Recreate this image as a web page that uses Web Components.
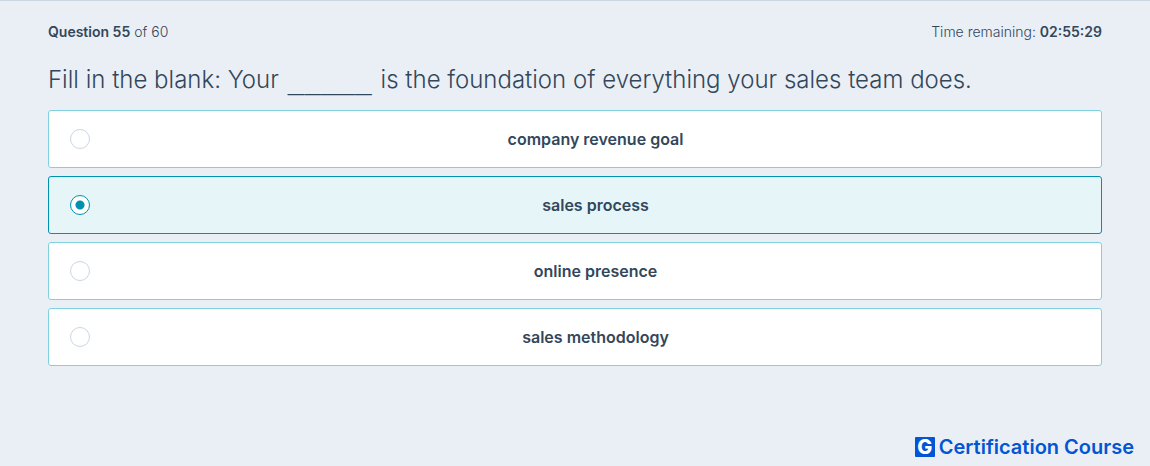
<!DOCTYPE html>
<html lang="en">
<head>
<meta charset="utf-8">
<meta name="viewport" content="width=device-width, initial-scale=1">
<title>Exam question</title>
<style>
  html { height: 100%; }
  body { margin: 0; min-height: 100%; display: grid; background: #eaeff6; color: #33475b; font-family: Inter, "Open Sans", sans-serif; }
  b { font-weight: 600; }
  .blank { margin: 0 2px; font-family: "DejaVu Sans Mono", monospace; font-size: 28px; line-height: 24px; }
</style>
</head>
<body>
<exam-page>
  <exam-status slot="status">
    <span slot="progress"><b>Question 55</b> of 60</span>
    <span slot="time">Time remaining: <b>02:55:29</b></span>
  </exam-status>
  <exam-question>
    <span slot="prompt">Fill in the blank: Your <span class="blank">_____</span> is the foundation of everything your sales team does.</span>
    <span slot="a">company revenue goal</span>
    <span slot="b">sales process</span>
    <span slot="c">online presence</span>
    <span slot="d">sales methodology</span>
  </exam-question>
  <course-brand slot="brand">Certification Course</course-brand>
</exam-page>
<script>
class ShadowElement extends HTMLElement {
  constructor() {
    super();
    this.attachShadow({ mode: "open" }).innerHTML = this.constructor.markup;
  }
}

customElements.define("exam-page", class extends ShadowElement {
  static markup = `
    <style>
      :host { display: flex; flex-direction: column; box-sizing: border-box; border-top: 1px solid #cbd6e2; }
      main { flex: 1; padding: 19px 48px; }
      footer { display: flex; justify-content: flex-end; padding: 0 16px 7px; }
    </style>
    <main><slot name="status"></slot><slot></slot></main>
    <footer><slot name="brand"></slot></footer>`;
});

customElements.define("exam-status", class extends ShadowElement {
  static markup = `
    <style>
      :host { display: flex; justify-content: space-between; gap: 16px; font-size: 14px; line-height: 24px; font-weight: 300; }
    </style>
    <slot name="progress"></slot><slot name="time"></slot>`;
});

customElements.define("exam-question", class extends ShadowElement {
  static markup = `
    <style>
      :host { display: block; }
      fieldset { margin: 0; padding: 0; border: 0; min-width: 0; display: flex; flex-direction: column; gap: 8px; }
      legend { padding: 18px 0 12px; font-size: 24px; line-height: 36px; font-weight: 300; }
      label { display: flex; align-items: center; box-sizing: border-box; min-height: 58px; padding-left: 21px;
        border: 1px solid #7fd1de; border-radius: 3px; background: #fff; cursor: pointer;
        font-size: 16px; line-height: 24px; font-weight: 600; }
      label:has(:checked) { border-color: #0091ae; background: #e5f5f8; }
      .text { flex: 1; text-align: center; }
      input { appearance: none; flex: none; box-sizing: border-box; width: 20px; height: 20px; margin: 0;
        border: 1px solid #cbd6e2; border-radius: 50%; background: #fff; }
      input:checked { border-color: #0091ae; background: radial-gradient(circle, #0091ae 4px, #fff 5px); }
    </style>
    <fieldset>
      <legend><slot name="prompt"></slot></legend>
      <label><input type="radio" name="answer" value="a"><span class="text"><slot name="a"></slot></span></label>
      <label><input type="radio" name="answer" value="b" checked><span class="text"><slot name="b"></slot></span></label>
      <label><input type="radio" name="answer" value="c"><span class="text"><slot name="c"></slot></span></label>
      <label><input type="radio" name="answer" value="d"><span class="text"><slot name="d"></slot></span></label>
    </fieldset>`;
});

customElements.define("course-brand", class extends ShadowElement {
  static markup = `
    <style>
      :host { display: flex; align-items: center; gap: 4px; color: #0355d3; font-size: 20px; line-height: 24px; font-weight: 600; }
      .mark { display: grid; place-items: center; width: 20px; height: 20px; border-radius: 1px; background: #0355d3; color: #fff; line-height: 20px; font-weight: 800; }
    </style>
    <span class="mark">G</span><span><slot></slot></span>`;
});
</script>
</body>
</html>
